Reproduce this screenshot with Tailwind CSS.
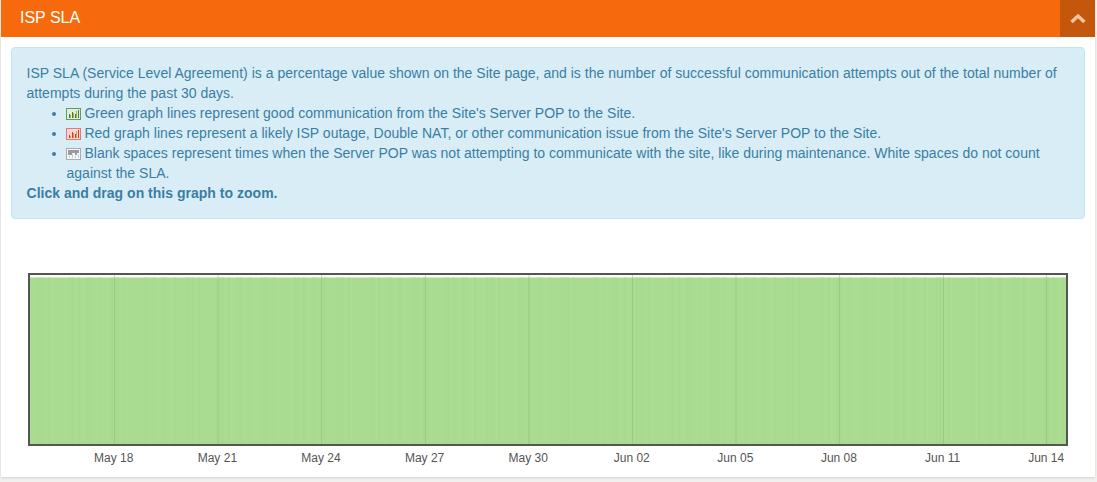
<!DOCTYPE html>
<html lang="en">
<head>
    <meta charset="UTF-8">
    <meta name="viewport" content="width=device-width, initial-scale=1.0">
    <title>ISP SLA</title>
    <script src="https://cdn.jsdelivr.net/npm/@tailwindcss/browser@4"></script>
</head>
<body class="bg-[#f1f0ee] font-['Liberation_Sans',Arial,sans-serif] text-[14px] leading-[20px] h-[482px] overflow-hidden">
    <div class="ml-px w-[1094px] h-[477px] bg-white shadow-[0_1px_2px_rgba(0,0,0,0.12)]">
        <!-- Header -->
        <div class="flex h-[37px] bg-[#f66a0d] text-white">
            <h3 class="flex-1 pl-[19px] pt-[7px] text-[16px] leading-[22px] font-normal">ISP SLA</h3>
            <div class="flex w-[35px] items-center justify-center bg-[#c4570b]">
                <svg width="16" height="10" viewBox="0 0 16 10"><path d="M1.5 8 L8 2 L14.5 8" fill="none" stroke="#f3c2a0" stroke-width="3.4"/></svg>
            </div>
        </div>

        <!-- Info box -->
        <div class="mx-[10px] mt-[10px] h-[172px] rounded-[4px] border border-[#bce8f1] bg-[#d9edf7] py-[15px] pl-[14.5px] pr-[14px] text-[#3a7ea3] tracking-[0.015px]">
            <p>ISP SLA (Service Level Agreement) is a percentage value shown on the Site page, and is the number of successful communication attempts out of the total number of attempts during the past 30 days.</p>
            <ul class="list-disc pl-[40px]">
                <li>
                    <svg class="inline-block align-[-2px] -ml-[1px]" width="15" height="12" viewBox="0 0 15 12"><rect x="0.5" y="0.5" width="14" height="11" fill="#dff0d8" stroke="#5f9d5f"/><path d="M3 6h1v4H3zM6 4h1v6H6zM9 6h1v4H9zM12 2h1v8h-1z" fill="#2f7f6a"/><path d="M4 7h1v3H4zM7 5h1v5H7zM10 3h1v7h-1z" fill="#c9a227"/></svg>
                    Green graph lines represent good communication from the Site's Server POP to the Site.
                </li>
                <li>
                    <svg class="inline-block align-[-2px] -ml-[1px]" width="15" height="12" viewBox="0 0 15 12"><rect x="0.5" y="0.5" width="14" height="11" fill="#f9d6d2" stroke="#e07a7a"/><path d="M3 7h1v3H3zM6 4h1v6H6zM9 6h1v4H9zM12 2h1v8h-1z" fill="#d03a28"/><path d="M4 8h1v2H4zM7 5h1v5H7zM10 3h1v7h-1z" fill="#e89a3c"/></svg>
                    Red graph lines represent a likely ISP outage, Double NAT, or other communication issue from the Site's Server POP to the Site.
                </li>
                <li>
                    <svg class="inline-block align-[-2px] -ml-[1px]" width="15" height="12" viewBox="0 0 15 12"><rect x="0.5" y="0.5" width="14" height="11" fill="#f4f8fa" stroke="#aaaaaa"/><path d="M2 2h11v3h-2v2H9V5H6v2H2z" fill="#9a9a9a"/><path d="M3 8h1v2H3zM6 6h1v4H6zM9 8h1v2H9zM12 6h1v4h-1z" fill="#b5d3e6"/></svg>
                    Blank spaces represent times when the Server POP was not attempting to communicate with the site, like during maintenance. White spaces do not count against the SLA.
                </li>
            </ul>
            <b class="font-bold">Click and drag on this graph to zoom.</b>
        </div>

        <!-- Graph -->
        <div class="ml-[27px] mt-[54px] w-[1040px]">
            <svg id="graph" class="block border-2 border-[#555555]" width="1040" height="173" viewBox="0 0 1036 169" preserveAspectRatio="none"></svg>
            <div class="flex pl-[34px] pt-[3px] text-[12px] leading-[18px] text-[#555555]">
                <span class="w-[103.6px] shrink-0 text-center">May 18</span>
                <span class="w-[103.6px] shrink-0 text-center">May 21</span>
                <span class="w-[103.6px] shrink-0 text-center">May 24</span>
                <span class="w-[103.6px] shrink-0 text-center">May 27</span>
                <span class="w-[103.6px] shrink-0 text-center">May 30</span>
                <span class="w-[103.6px] shrink-0 text-center">Jun 02</span>
                <span class="w-[103.6px] shrink-0 text-center">Jun 05</span>
                <span class="w-[103.6px] shrink-0 text-center">Jun 08</span>
                <span class="w-[103.6px] shrink-0 text-center">Jun 11</span>
                <span class="w-[103.6px] shrink-0 text-center">Jun 14</span>
            </div>
        </div>
    </div>

    <script>
        // Draw the SLA bars and the gridlines
        const svg = document.getElementById('graph');
        const NS = 'http://www.w3.org/2000/svg';

        function addRect(x, y, w, h, fill) {
            const r = document.createElementNS(NS, 'rect');
            r.setAttribute('x', x);
            r.setAttribute('y', y);
            r.setAttribute('width', w);
            r.setAttribute('height', h);
            r.setAttribute('fill', fill);
            svg.appendChild(r);
        }

        addRect(0, 2.5, 1036, 166.5, '#a9dc90');

        // slightly uneven bars, repeatable from run to run
        let seed = 7;
        for (let x = 0; x < 1036; x += 3) {
            seed = (seed * 31 + 11) % 101;
            if (seed % 4 === 0) addRect(x, 2.5, 2, 166.5, '#a7da8e');
        }

        // Gridlines
        [84, 187.5, 291, 395, 498.5, 602, 705.5, 809, 913, 1016].forEach(x => {
            addRect(x, 0, 1, 2.5, '#d4d4d4');
            addRect(x, 2.5, 1, 166.5, '#96cb80');
        });
    </script>
</body>
</html>
